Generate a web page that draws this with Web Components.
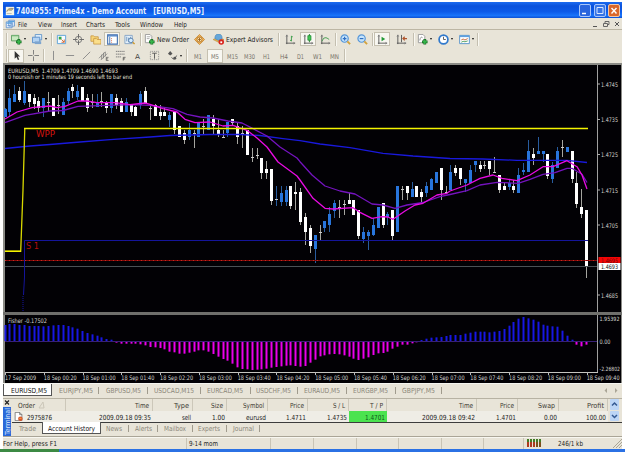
<!DOCTYPE html>
<html lang="en">
<head>
<meta charset="utf-8">
<title>7404955: Prime4x - Demo Account</title>
<style>
body
{
    margin: 0;
    width: 625px;
    height: 452px;
    overflow: hidden;
    background: #fff;
    font-family: "DejaVu Sans Condensed", "DejaVu Sans", sans-serif;
    font-size: 7px;
    color: #222;
    --face: #e8e4d8;
    --line: #bdb8a8;
}
</style>
</head>
<body>
<trade-app></trade-app>

<script>
//Small helper: every component gets an open shadow root
function mount(el, html) {
  el.attachShadow({ mode: "open" }).innerHTML = html;
}

//One line of text set to a fixed width
class FitText extends HTMLElement {
  connectedCallback() {
    const w = this.getAttribute("w");
    const size = this.getAttribute("size") || 7;
    mount(this, `
<style>
:host { display: block; flex: none; width: ${w}px; height: 10px; }
svg { display: block; overflow: visible; }
text { fill: currentColor; font-size: ${size}px; }
</style>
<svg width="${w}" height="10"><text x="0" y="7.6" textLength="${w}" lengthAdjust="spacingAndGlyphs">${this.getAttribute("t")}</text></svg>`);
  }
}
customElements.define("fit-text", FitText);

//Icons, drawn on a 12 x 12 box
const axes = `<path d="M2 1v10M1 10h10" stroke="#555" fill="none"/><path d="M1 3l1-2 1 2M9 9l2 1-2 1" stroke="#777" stroke-width=".6" fill="none"/>`;
const plus = `<path d="M8.5 5.5v6M5.5 8.5h6" stroke="#176b22" stroke-width="3"/><path d="M8.5 6.2v4.6M6.2 8.5h4.6" stroke="#36b54a" stroke-width="1.7"/>`;
const page = `<path d="M1.5.5h5l2 2v7h-7z" fill="#fff" stroke="#999"/>`;
const icons = {
  app: `<path d="M1 1h10v10H1z" fill="#f7f5e4"/><path d="M2 7q1-5 8-4l-2 2H5" fill="#d0c078" stroke="#777" stroke-width=".8"/><path d="M2 9h6" stroke="#999" stroke-width=".7"/>`,
  mdi: `<path d="M1.500 3.500h7v7h-7zM4.500 1.500h7v7h-7z" fill="#eef5ff" stroke="#5d8fcd"/><path d="M2 5h6M5 3h6" stroke="#58a2df" stroke-width="1.500"/><path d="M6 6h4M3 8h4" stroke="#5d8fcd"/>`,
  newchart: `<path d="M.5 1.500h8v6h-8z" fill="#c9eac1" stroke="#5a9a60"/><path d="M1 2h7" stroke="#78b977"/>` + plus,
  profiles: `<path d="M3.500.5h7v6h-7z" fill="#dcecfb" stroke="#6798c8"/><path d="M.5 3.500h8v6h-8z" fill="#b3d3f3" stroke="#5b8ec8"/><path d="M3 8h7v3H3z" fill="#7ea5cf"/>`,
  market: `<path d="M1.500 1.500h9v9h-9z" fill="#f6fbff" stroke="#5aa0d8"/><path d="M3 3h3v3H3z" fill="#35a647"/><path d="M6 6l3 3M9 6v3H6" stroke="#d4662e" fill="none"/>`,
  cross: `<circle cx="6" cy="6" r="3.500" fill="none" stroke="#777"/><path d="M6 0v5M6 7v5M0 6h5M7 6h5" stroke="#666"/>`,
  folders: `<path d="M1 2h3l1 1h4v5H1z" fill="#f6d477" stroke="#c5913a" stroke-width=".8"/><path d="M4 5h3l1 1h4v5H4z" fill="#fbdf8b" stroke="#c5913a" stroke-width=".8"/>`,
  terminal: `<path d="M.7 1h10.600v10H.7z" fill="#fff" stroke="#416fae" stroke-width="1.200"/><path d="M1 2h10" stroke="#5385c8" stroke-width="1.500"/><path d="M3 3v8" stroke="#4173b2"/><path d="M4.500 5h1M4.500 7h1M4.500 9h1" stroke="#d86c4e"/>`,
  tester: `<path d="M1 1.500h8v9H1z" fill="#e6f1fa" stroke="#84a3c5"/><path d="M3 3v5M5 4v5M7 3v4" stroke="#6d95c0"/><circle cx="7.500" cy="7" r="2.500" fill="#d4edff" stroke="#557ca9"/><path d="M9.500 9l2 2" stroke="#cc9a2e" stroke-width="1.500"/>`,
  order: page + `<path d="M3 3h4M3 5h3" stroke="#aaa"/>` + plus,
  meta: `<path d="M6 .5L11.500 6 6 11.500.5 6z" fill="#f3b65e" stroke="#c98b37"/><circle cx="6" cy="6" r="2.800" fill="#fbe0a9" stroke="#ae7427"/><path d="M6 4v4M4.500 6h3" stroke="#9c631d"/>`,
  expert: `<path d="M0 6l6-2 6 2-6 3z" fill="#e7b34e" stroke="#b7862e" stroke-width=".6"/><path d="M2 5q0-5 4-5t4 5l-4 2z" fill="#66a7d9" stroke="#417fb5" stroke-width=".6"/><circle cx="9" cy="8.800" r="3" fill="#d8231c"/><path d="M8 8h2v2H8z" fill="#fff"/>`,
  bars: axes + `<path d="M7 2v6M5.500 7H7M7 3h1.500" stroke="#3a9b47" fill="none"/>`,
  candle: axes + `<path d="M7 0v9" stroke="#23782e"/><path d="M5.300 1.800h3.400v5H5.300z" fill="#43c755" stroke="#218a31" stroke-width=".8"/>`,
  linechart: axes + `<path d="M2 8q2-5 4.500-4T10 6" stroke="#3f9b4b" fill="none"/>`,
  zoomin: `<circle cx="5" cy="5" r="4" fill="#c5e3fb" stroke="#5696d8" stroke-width="1.300"/><path d="M5 3v4M3 5h4" stroke="#2f6fc2" stroke-width="1.300"/><path d="M8 8l3 3" stroke="#d3a23c" stroke-width="2"/>`,
  zoomout: `<circle cx="5" cy="5" r="4" fill="#c5e3fb" stroke="#5696d8" stroke-width="1.300"/><path d="M3 5h4" stroke="#2f6fc2" stroke-width="1.300"/><path d="M8 8l3 3" stroke="#d3a23c" stroke-width="2"/>`,
  scroll: axes + `<path d="M5 3l4 2.500L5 8z" fill="#239a36"/>`,
  shift: axes + `<path d="M6 1v8" stroke="#555"/><path d="M12 5H8M9.500 3L7.500 5l2 2" stroke="#b1562d" stroke-width="1.200" fill="none"/>`,
  indicator: page + `<path d="M3 7q1-5 3-3" stroke="#888" fill="none"/>` + plus,
  clock: `<circle cx="6" cy="6" r="4.800" fill="#fff" stroke="#3079cc" stroke-width="1.900"/><path d="M6 3v3h2.500" stroke="#555" fill="none"/>`,
  template: `<path d="M.7 1.500h10.600v9H.7z" fill="#fff" stroke="#5290cb"/><path d="M1 2.500h10" stroke="#5fa0df" stroke-width="1.800"/><path d="M2.500 6.500l2-1 2 1 3-1.500" stroke="#c36434" fill="none"/><path d="M2.500 9l2-1 2 .5 3-1" stroke="#4a9d5a" fill="none"/>`,
  cursor: `<path d="M4 1v8.500l2-2 1.500 3.500 1.500-.7L7.500 7H10z" fill="#333"/>`,
  plus: `<path d="M6 0v5M6 7v5M0 6h5M7 6h5" stroke="#777"/>`,
  vline: `<path d="M6 1v10" stroke="#888"/>`,
  hline: `<path d="M2 6h9" stroke="#888"/>`,
  trend: `<path d="M2 10l8-8" stroke="#888"/>`,
  channel: `<path d="M1 9l7-7M3 11l7-7M4 5v5M6 3v6M8 2v5" stroke="#777" stroke-width=".8"/><path d="M9 8h2.500M9 8v3.500h2.500M9 9.700h2" stroke="#444" fill="none" stroke-width=".7"/>`,
  fibo: `<path d="M1 1.500h10M1 4.500h10M1 7.500h6" stroke="#777" stroke-dasharray="1.500 .5"/><path d="M9 11.500V8h2.500M9 9.700h2" stroke="#444" fill="none" stroke-width=".8"/>`,
  label: `<path d="M1.500 1.500h9v9h-9z" fill="none" stroke="#888" stroke-dasharray="1 1"/><path d="M3.500 3.500h5M6 3.500v6" stroke="#555"/>`,
  arrows: `<path d="M1 4l2.500-3L6 4 3.500 6z" fill="#555"/><path d="M5 8l2 2 4-4" stroke="#555" fill="none"/><circle cx="8.500" cy="9" r="1.600" fill="#555"/>`,
  sheet: `<path d="M1.500.5h6l3 3v8h-9z" fill="#fff" stroke="#666"/><path d="M7.500.5v3h3" fill="none" stroke="#666"/><circle cx="8.500" cy="9" r="3" fill="#d9542b"/><path d="M7 8.500h3" stroke="#f6c04a"/>`
};

class ToolIcon extends HTMLElement {
  connectedCallback() {
    const size = this.getAttribute("size") || 11;
    mount(this, `
<style>
:host { display: block; flex: none; width: ${size}px; height: ${size}px; }
svg { display: block; }
</style>
<svg width="${size}" height="${size}" viewBox="0 0 12 12">${icons[this.getAttribute("name")]}</svg>`);
  }
}
customElements.define("tool-icon", ToolIcon);

//Toolbar button: width comes from w, flags are on / drop
class ToolButton extends HTMLElement {
  connectedCallback() {
    mount(this, `
<style>
:host
{
    display: flex;
    flex: none;
    box-sizing: border-box;
    width: ${this.getAttribute("w")}px;
    height: 14px;
    align-items: center;
    justify-content: center;
    gap: 2px;
}
:host([on]) { background: #f8f7f1; border: 1px solid #c6c1b1; }
i { width: 0; border: 1.5px solid transparent; border-top: 2px solid #111; border-bottom: 0; }
</style>
<slot></slot>${this.hasAttribute("drop") ? "<i></i>" : ""}`);
  }
}
customElements.define("tool-button", ToolButton);

class ToolBar extends HTMLElement {
  constructor() {
    super();
    mount(this, `
<style>
:host { display: flex; align-items: center; box-sizing: border-box; height: 16px; padding-left: 2px; }
::slotted(hr) { flex: none; margin: 0 1px; border: 0; width: 1px; height: 13px; background: #c4bfb0; box-shadow: 1px 0 #f9f8f2; }
</style>
<slot></slot>`);
  }
}
customElements.define("tool-bar", ToolBar);

//Blue caption with the three window buttons
class TitleBar extends HTMLElement {
  constructor() {
    super();
    mount(this, `
<style>
:host
{
    display: flex;
    align-items: center;
    box-sizing: border-box;
    height: 16px;
    padding: 1px 2px 0 2px;
    gap: 2.500px;
    color: #e8f2ff;
    background: linear-gradient(#1c6cf0, #0b52dc 25%, #0c5ae8 60%, #1874fa 85%, #0c50d4);
}
.grow { flex: 1; }
svg { display: block; }
</style>
<tool-icon name="app" size="10"></tool-icon>
<fit-text w="188" size="9" t="7404955: Prime4x - Demo Account &#160; [EURUSD,M5]" style="margin-left:-1.5px;font-weight:bold"></fit-text>
<span class="grow"></span>
<svg width="12" height="13"><rect x=".5" y=".5" width="11" height="12" rx="1.500" fill="#2a65dd" stroke="#a9c7fa"/><path d="M3 9.500h4" stroke="#fff" stroke-width="1.500"/></svg>
<svg width="12" height="13"><rect x=".5" y=".5" width="11" height="12" rx="1.500" fill="#3674e6" stroke="#a9c7fa"/><path d="M3 3.500h6v6H3z" fill="none" stroke="#dce9ff"/></svg>
<svg width="12" height="13"><rect x=".5" y=".5" width="11" height="12" rx="1.500" fill="#da672a" stroke="#f2c8a5"/><path d="M3.500 4l5 5.500m0-5.500l-5 5.500" stroke="#fff" stroke-width="1.400"/></svg>`);
  }
}
customElements.define("title-bar", TitleBar);

class MenuBar extends HTMLElement {
  constructor() {
    super();
    //label, text width, room up to the next label
    const items = [["File", 9, 20], ["View", 14, 23], ["Insert", 16, 25], ["Charts", 19, 29], ["Tools", 15, 25], ["Window", 23, 34], ["Help", 13, 20]];
    mount(this, `
<style>
:host { display: flex; align-items: center; box-sizing: border-box; height: 12px; padding: 0 1px 0 2px; border-bottom: 1px solid #bcb6a4; }
tool-icon { margin-right: 3px; }
span { flex: none; }
svg { margin-left: auto; }
</style>
<tool-icon name="mdi" size="10"></tool-icon>
${items.map(([t, w, room]) => `<span style="width:${room}px"><fit-text w="${w}" t="${t}"></fit-text></span>`).join("")}
<svg width="30" height="10"><path d="M2 7.500h4" stroke="#555"/><path d="M12.500 4.500h4v3h-4zM14 4V2.500h4v3h-1.500" fill="none" stroke="#666"/><path d="M24 3l4 4m0-4l-4 4" stroke="#555"/></svg>`);
  }
}
customElements.define("menu-bar", MenuBar);

const STEP = 4.847;
const barX = (k) => 2.5 + k * STEP;

//high, body top, body bottom, low, up(1) / down(0); screen rows
const candles = [
  [108, 109, 117, 117, 1], [89, 98, 112, 117, 1], [85, 94, 102, 102, 1], [87, 91, 100, 102, 0], [81, 91, 103, 105, 1],
  [94, 94, 102, 107, 0], [94, 98, 104, 109, 0], [97, 101, 108, 112, 0], [98, 98, 108, 117, 1], [92, 102, 102, 112, 0],
  [98, 98, 116, 116, 0], [95, 105, 105, 114, 0], [98, 102, 115, 115, 1], [88, 91, 101, 104, 1], [84, 87, 91, 98, 0],
  [85, 91, 97, 100, 1], [87, 87, 101, 101, 0], [94, 98, 108, 112, 0], [94, 102, 102, 108, 0], [94, 102, 107, 107, 1],
  [92, 101, 101, 107, 0], [101, 102, 108, 113, 0], [94, 94, 108, 113, 1], [94, 98, 105, 109, 0], [98, 101, 112, 112, 0],
  [98, 102, 112, 112, 1], [105, 105, 112, 116, 0], [106, 107, 116, 116, 0], [91, 94, 105, 109, 1], [87, 91, 104, 104, 0],
  [105, 108, 108, 120, 0], [104, 105, 116, 116, 0], [105, 112, 116, 120, 0], [108, 112, 116, 116, 0], [112, 115, 120, 127, 1],
  [112, 112, 130, 134, 0], [126, 126, 137, 137, 0], [130, 133, 140, 144, 0], [123, 130, 137, 140, 1], [130, 133, 133, 148, 0],
  [122, 123, 137, 137, 1], [119, 126, 126, 134, 0], [115, 115, 130, 130, 1], [115, 119, 126, 134, 0], [119, 130, 134, 137, 0],
  [130, 137, 137, 137, 0], [122, 122, 133, 137, 1], [119, 119, 123, 126, 0], [123, 126, 137, 144, 0], [126, 133, 133, 148, 0],
  [130, 130, 155, 155, 0], [148, 157, 157, 162, 0], [148, 155, 155, 159, 0], [158, 158, 173, 179, 0], [161, 169, 173, 179, 0],
  [169, 169, 201, 205, 0], [186, 199, 199, 206, 1], [186, 193, 202, 206, 1], [186, 190, 202, 206, 1], [186, 186, 206, 209, 0],
  [182, 192, 194, 210, 0], [188, 192, 222, 225, 0], [213, 217, 232, 245, 0], [225, 228, 246, 253, 0], [235, 235, 249, 263, 1],
  [225, 232, 232, 240, 0], [221, 221, 228, 232, 1], [207, 214, 225, 232, 1], [200, 203, 211, 218, 1], [200, 207, 207, 218, 0],
  [200, 204, 204, 215, 0], [193, 200, 204, 204, 0], [200, 200, 215, 215, 0], [210, 210, 236, 239, 0], [227, 232, 239, 243, 1],
  [230, 232, 236, 250, 1], [218, 225, 235, 236, 1], [207, 207, 228, 228, 1], [203, 203, 225, 228, 0], [212, 214, 217, 225, 1],
  [210, 210, 236, 240, 0], [186, 186, 232, 232, 1], [186, 189, 189, 200, 0], [186, 186, 193, 200, 0], [182, 189, 197, 197, 1],
  [186, 186, 197, 197, 0], [189, 192, 197, 203, 0], [182, 186, 193, 197, 1], [178, 179, 190, 190, 1], [172, 172, 183, 183, 1],
  [168, 168, 190, 200, 0], [186, 192, 192, 193, 0], [165, 172, 190, 190, 1], [165, 168, 173, 176, 0], [168, 168, 179, 185, 0],
  [179, 179, 183, 192, 1], [165, 170, 183, 183, 1], [161, 161, 165, 172, 1], [161, 165, 169, 172, 0], [161, 165, 165, 169, 0],
  [161, 161, 169, 175, 0], [157, 172, 172, 172, 0], [175, 175, 190, 193, 0], [183, 186, 190, 190, 0], [180, 183, 187, 190, 1],
  [180, 186, 190, 193, 0], [168, 175, 193, 193, 1], [163, 170, 172, 175, 1], [140, 151, 172, 172, 1], [148, 154, 158, 165, 0],
  [137, 151, 154, 154, 1], [151, 151, 154, 162, 1], [154, 154, 176, 179, 0], [162, 165, 179, 183, 1], [147, 151, 168, 168, 1],
  [140, 147, 147, 157, 0], [147, 147, 152, 152, 1], [151, 151, 179, 183, 0], [172, 183, 204, 208, 0], [189, 207, 214, 218, 0],
  [210, 210, 267, 278, 0]
];

//Signed bar lengths, a third of a pixel each
const fisher = [
  48, 51, 51, 48, 48, 45, 45, 45, 44, 45, 47, 48, 48, 45, 41, 37, 30, 24, 20, 16, 11, 6, 4, -2, -5, -5, -5, -5, -7, -10,
  -15, -16, -18, -22, -29, -31, -35, -35, -32, -29, -25, -25, -29, -36, -44, -51, -56, -65, -76, -81, -82, -84, -83, -82,
  -80, -77, -75, -73, -71, -70, -72, -74, -72, -62, -53, -43, -40, -37, -36, -37, -40, -44, -50, -54, -50, -46, -39, -34,
  -33, -29, -20, -14, -8, -8, -4, -1, 3, 7, 10, 11, 12, 15, 18, 18, 18, 22, 25, 28, 28, 28, 26, 28, 30, 36, 46, 57, 67,
  72, 68, 64, 58, 49, 46, 44, 43, 31, 16, 4, -8, -13, -8
];

//Price chart, Fisher pane and both axes. The svg keeps window rows through its viewBox
class PriceChart extends HTMLElement {
  constructor() {
    super();
    const bars = candles.map(([h, t, b, l, up], k) => {
      const x = Math.round(barX(k) + 3) - 0.5;
      const wick = `<path d="M${x} ${h}V${l}" stroke="${up ? "#285c9e" : "#a5a5a0"}"/>`;
      if (b - t < 1) return wick + `<path d="M${x - 1.5} ${t + 0.5}h3" stroke="#ccc"/>`;
      return wick + `<path d="M${x - 1.5} ${t}h3v${b - t}h-3z" fill="${up ? "#2875dc" : "#fff"}"/>`;
    }).join("");
    const hist = fisher.map((v, k) => {
      const x = Math.round(barX(k) + 3) - 1.5;
      const h = Math.abs(v) / 3;
      return `<rect x="${x}" y="${v > 0 ? 341 - h : 342}" width="2" height="${h}" fill="${v > 0 ? "#1717e3" : "#ea00ea"}"/>`;
    }).join("");
    const label = (x, y, w, t, fill = "#d5d5d0", size = 6.2) =>
      `<text x="${x}" y="${y}" textLength="${w}" lengthAdjust="spacingAndGlyphs" fill="${fill}" font-size="${size}">${t}</text>`;
    const prices = [["1.4745", 84], ["1.4735", 119.500], ["1.4725", 154.500], ["1.4715", 190], ["1.4705", 225], ["1.4685", 295]]
      .map(([t, y]) => `<path d="M597 ${y}h3" stroke="#aaa"/>` + label(601, y + 2.5, 17, t)).join("");
    const times = ["17 Sep 2009", "18 Sep 00:20", "18 Sep 01:00", "18 Sep 01:40", "18 Sep 02:20", "18 Sep 03:00", "18 Sep 03:40", "18 Sep 04:20",
      "18 Sep 05:00", "18 Sep 05:40", "18 Sep 06:20", "18 Sep 07:00", "18 Sep 07:40", "18 Sep 08:20", "18 Sep 09:00", "18 Sep 09:40"]
      .map((t, i) => `<path d="M${5.5 + Math.round(i * STEP * 8)} 372v3" stroke="#bbb"/>` + label(5 + i * STEP * 8, 380, i ? 33 : 31, t)).join("");
    mount(this, `
<style>
:host { display: block; height: 321px; }
svg { display: block; overflow: visible; }
.ma { fill: none; stroke-width: 1.3; stroke-linejoin: round; }
</style>
<svg width="619" height="321" viewBox="3 63 619 321">
<path d="M3 63h619v321H3z" fill="#8b8b86"/>
<path d="M5 65h616v318H5z" fill="#020105"/>
${bars}
<path d="M5 260.500h592" stroke="#850808"/><path d="M5 260.500h592" stroke="#c62b1e" stroke-dasharray="1 3"/>
<path d="M5 266.500h592" stroke="#4b5155"/>
<path d="M588 240.500H24.500V277L23.500 295" fill="none" stroke="#14149a"/><path d="M23 296v16" stroke="#1414a0" stroke-dasharray="1 1"/>
<polyline class="ma" stroke="#1919dc" points="5,148.500 30,146 50,144.500 80,142 110,139.700 150,137 170,135.500 210,134.500 240,134.500 260,135.500 283,138.700 300,140.700 320,144 350,147.700 383,153.300 413,156 450,158.500 483,159 517,160.300 567,160.300 587,162.500"/>
<polyline class="ma" stroke="#7413be" points="5,122.700 25,115.300 50,111 63,110.500 78,106.300 100,105.700 133,104.700 150,105.300 173,108.700 187,114.300 200,117 213,118 228,121 242,123 253,128.700 267,136 280,147 297,158 300,161.700 312,175 325,186 340,191 355,194 372,204 383,205 395,208.300 407,205 423,202.500 440,196.700 450,194.500 467,190.700 480,185 497,182.300 518,183.300 530,179.300 543,174.300 555,172.700 567,168.300 572,168.300 582,174.300 587,182.500"/>
<polyline class="ma" stroke="#e80be2" points="5,119 17,112 32,107.700 50,106 57,107.700 65,106.300 78,101 87,101 97,102.700 115,102.700 130,104.700 145,103 150,104.300 163,108.700 177,112 185,119.300 195,122.700 210,122 223,126 233,125.300 247,130.300 257,138 267,147 278,162 297,176 300,180 313,198.300 325,208.300 333,209 353,207.700 360,212.300 372,218.300 382,216.700 388,217 393,219.300 405,211 415,205 423,203.300 437,195 447,193.300 450,191 467,185 480,178.300 493,175 502,178.300 517,180.700 530,175 543,166.700 553,166.700 567,160.700 577,166.700 582,175 587,189"/>
<path d="M5 251.300h15.700L23 190l1.800-61.700" fill="none" stroke="#d8d800" stroke-width="1.300"/>
<path d="M24 128.500H588M5 251.300h16" stroke="#f4f400" stroke-width="1.400"/>
${label(8, 73, 110, "EURUSD,M5 &#160;1.4709 1.4709 1.4690 1.4693", "#e2e2dc", 6)}
${label(8, 79.300, 124, "0 hoursish or 1 minutes 19 seconds left to bar end", "#e2e2dc", 6)}
${label(36, 136.500, 19, "WPP", "#d4140e", 8)}
${label(26, 248.500, 13, "S 1", "#b40d0d", 8)}
<path d="M3 312h619v3H3z" fill="#6f6f6c"/>
<path d="M5 341.500h592" stroke="#382078"/>
${hist}
${label(8, 322.500, 39, "Fisher -0.17502")}
<path d="M597.500 65v247M597.500 315v57" stroke="#a0a0a0"/>
<path d="M5 372.500h593" stroke="#c5c5c0"/>
${prices}
<path d="M598.500 257h22v6h-22z" fill="#f50505"/>${label(601, 262.500, 17, "1.4695", "#6a0808")}
<path d="M598.500 263h22v7h-22z" fill="#fff"/>${label(601, 269, 17, "1.4693", "#111")}
${label(599.500, 321, 20, "1.95392", "#d5d5d0", 5.8)}${label(599.500, 343.500, 11, "0.00")}${label(599.500, 370.500, 20.5, "-2.26802", "#d5d5d0", 5.8)}
${times}
<path d="M3 383.500h619" stroke="#f4f4ef"/>
</svg>`);
  }
}
customElements.define("price-chart", PriceChart);

//Row of tabs. Each cell ends with its own divider
class TabStrip extends HTMLElement {
  connectedCallback() {
    const tabs = JSON.parse(this.getAttribute("tabs"));
    const on = Number(this.getAttribute("on"));
    mount(this, `
<style>
:host { display: flex; align-items: flex-start; color: #8a8678; }
div { display: flex; flex: none; align-items: center; box-sizing: border-box; height: 12px; position: relative; }
div::after { content: ""; position: absolute; right: 0; top: 3px; height: 7px; width: 1px; background: #a09b8d; }
.on { background: #fff; color: #111; border: 1px solid #555; border-top: 0; }
.on::after, .bare::after { display: none; }
</style>
${tabs.map(([t, cell, pad, w], i) => `<div class="${i === on ? "on" : i === on - 1 ? "bare" : ""}" style="width:${cell}px;padding-left:${pad}px"><fit-text w="${w}" t="${t}"></fit-text></div>`).join("")}
<slot></slot>`);
  }
}
customElements.define("tab-strip", TabStrip);

//Docked terminal window with the order history
class TerminalPane extends HTMLElement {
  constructor() {
    super();
    //column width, header, header width, value, value width
    const cols = [
      [54, "Order", 17, "2975876", 25], [87, "Time", 14, "2009.09.18 09:35", 52], [40, "Type", 15, "sell", 9],
      [34, "Size", 12, "1.00", 13], [41, "Symbol", 21, "eurusd", 20], [40, "Price", 14, "1.4711", 20],
      [41, "S / L", 12, "1.4735", 20], [38, "T / P", 13, "1.4701", 20], [90, "Time", 14, "2009.09.18 09:42", 53],
      [41, "Price", 14, "1.4701", 20], [41, "Swap", 17, "0.00", 13], [49, "Profit", 17, "100.00", 20]
    ];
    const row = (ti, wi, cls) => `<div class="row ${cls}">${cols.map((c, i) =>
      `<span style="width:${c[0]}px">${i === 0 && cls === "data" ? '<tool-icon name="sheet" size="9"></tool-icon>' : ""}<fit-text w="${c[wi]}" t="${c[ti]}"></fit-text>${i === 0 && cls === "head" ? '<svg width="7" height="8"><path d="M1 7l4-6 1 6z" fill="none" stroke="#cbc6b8"/></svg>' : ""}</span>`).join("")}</div>`;
    const tabs = [["Trade", 30, 7, 17], ["Account History", 59, 5, 47], ["News", 28, 5, 16], ["Alerts", 29, 6, 17], ["Mailbox", 35, 6, 22], ["Experts", 34, 5, 22], ["Journal", 33, 6, 21]];
    mount(this, `
<style>
:host { display: flex; height: 38px; border-top: 1px solid #b7b2a3; box-sizing: border-box; }
.side { display: flex; flex-direction: column; width: 9px; align-items: center; }
.side svg { display: block; }
.main { flex: 1; display: flex; flex-direction: column; }
.table { display: flex; height: 24px; border-bottom: 1px solid #3c3c3c; box-sizing: border-box; }
.row { display: flex; align-items: center; }
.row span { display: flex; align-items: center; justify-content: flex-end; box-sizing: border-box; padding-right: 2.500px; height: 100%; }
.row span:first-child { justify-content: flex-start; gap: 3px; }
.head { height: 12px; color: #3b3932; }
.head span { border-right: 1px solid #ccc7b9; padding-right: 3px; }
.head span:first-child { padding-left: 6px; }
.data { height: 11px; background: #efede6; }
.data span:first-child { padding-left: 2px; gap: 4px; }
.data span:nth-child(8) { background: #4be34f; color: #0b581a; }
.scroll { display: flex; flex-direction: column; gap: 1px; padding-left: 2px; }
tab-strip { margin-top: -1px; }
</style>
<div class="side">
  <svg width="9" height="8"><path d="M2 1.500l4 4m0-4l-4 4" stroke="#222" stroke-width="1.200"/></svg>
  <svg width="9" height="29"><rect width="8" height="29" fill="#2a68d8"/><text transform="translate(6.500 28) rotate(-90)" font-size="7" fill="#dbe8ff" textLength="27" lengthAdjust="spacingAndGlyphs">Terminal</text></svg>
</div>
<div class="main">
  <div class="table">
    <div>${row(1, 2, "head")}${row(3, 4, "data")}</div>
    <div class="scroll">
      <svg width="9" height="11"><rect width="9" height="11" rx="1" fill="#bcd5f6"/><path d="M2 6.500L4.500 4 7 6.500" fill="none" stroke="#355a93" stroke-width="1.500"/></svg>
      <svg width="9" height="10"><rect width="9" height="10" rx="1" fill="#bcd5f6"/><path d="M2 4l2.500 2.500L7 4" fill="none" stroke="#355a93" stroke-width="1.500"/></svg>
    </div>
  </div>
  <tab-strip on="1" tabs='${JSON.stringify(tabs)}'></tab-strip>
</div>`);
  }
}
customElements.define("terminal-pane", TerminalPane);

class StatusBar extends HTMLElement {
  constructor() {
    super();
    mount(this, `
<style>
:host { display: flex; align-items: center; box-sizing: border-box; height: 13px; border-top: 1px solid #aaa597; box-shadow: inset 0 1px #f8f7f1; }
div { display: flex; flex: none; align-items: center; height: 11px; box-sizing: border-box; border-right: 1px solid #c9c4b5; }
svg { margin-left: auto; }
</style>
<div style="width:184px"><fit-text w="54" t="For Help, press F1"></fit-text></div>
<div style="width:84px;padding-left:2px"><fit-text w="29" t="9-14 mom"></fit-text></div>
<div style="width:43px"></div><div style="width:43px"></div><div style="width:42px"></div><div style="width:43px"></div><div style="width:42px"></div>
<div style="width:40px"></div>
<svg width="14" height="9" style="margin:0 17px 0 3px"><path d="M0 4.500h14" stroke="#ad3a20" stroke-width="7" stroke-dasharray="2 1"/><path d="M0 1.500h14" stroke="#407c25" stroke-width="3" stroke-dasharray="2 1"/><path d="M9 5.500h5" stroke="#7c501b" stroke-width="5" stroke-dasharray="2 1"/></svg>
<fit-text w="25" t="246/1 kb"></fit-text>
<svg width="10" height="10"><path d="M1 10l9-9M4 10l6-6M7 10l3-3" stroke="#aaa595"/></svg>`);
  }
}
customElements.define("status-bar", StatusBar);

class TradeApp extends HTMLElement {
  constructor() {
    super();
    const pairs = [["EURUSD,M5", 49, 7, 36], ["EURJPY,M5", 47, 7, 34], ["GBPUSD,M5", 49, 7, 35], ["USDCAD,M15", 53, 6, 40], ["EURCAD,M5", 50, 6, 36],
      ["USDCHF,M5", 47, 5, 35], ["EURAUD,M5", 49, 6, 36], ["EURGBP,M5", 49, 6, 35], ["GBPJPY,M5", 46, 6, 33]];
    const btn = (name, w, flags = "") => `<tool-button w="${w}" ${flags}><tool-icon name="${name}"></tool-icon></tool-button>`;
    const frames = [["M1", 19, 8], ["M5", 16, 8, "on"], ["M15", 18, 11], ["M30", 17, 11], ["H1", 17, 7], ["H4", 17, 8], ["D1", 17, 7], ["W1", 17, 9], ["MN", 17, 9]];
    mount(this, `
<style>
:host { display: block; padding: 2px 3px 0; }
.window { display: flex; flex-direction: column; width: 619px; background: var(--face); }
.pairs { display: flex; height: 14px; }
.pairs svg { margin: 2px 3px 0 auto; }
.small { color: #77736a; }
.task { height: 3px; margin: 0 -3px; background: linear-gradient(90deg, #3c8a44 59px, #2b71e4 59px); }
</style>
<div class="window">
  <title-bar></title-bar>
  <menu-bar></menu-bar>
  <tool-bar style="height:18px">
    <hr>${btn("newchart", 20, "drop")}${btn("profiles", 22, "drop")}<hr>
    ${btn("market", 17)}${btn("cross", 17)}${btn("folders", 17)}${btn("terminal", 16, "on")}${btn("tester", 19)}<hr>
    <tool-button w="48"><tool-icon name="order"></tool-icon><fit-text w="32" t="New Order"></fit-text></tool-button>
    ${btn("meta", 19)}
    <tool-button w="68"><tool-icon name="expert"></tool-icon><fit-text w="47" t="Expert Advisors"></fit-text></tool-button><hr>
    ${btn("bars", 20)}${btn("candle", 16, "on")}${btn("linechart", 18)}<hr>
    ${btn("zoomin", 17)}${btn("zoomout", 17)}<hr>
    ${btn("scroll", 16, "on")}${btn("shift", 22)}<hr>
    ${btn("indicator", 19, "drop")}${btn("clock", 22, "drop")}${btn("template", 20, "drop")}<hr>
  </tool-bar>
  <tool-bar style="height:15px" class="small">
    <hr>${btn("cursor", 16, "on")}${btn("plus", 18)}<hr>
    ${btn("vline", 16)}${btn("hline", 17)}${btn("trend", 17)}${btn("channel", 17)}${btn("fibo", 17)}
    <tool-button w="17"><fit-text w="5" t="A" style="color:#444"></fit-text></tool-button>
    ${btn("label", 17)}${btn("arrows", 22, "drop")}<hr>
    ${frames.map(([t, w, tw, f]) => `<tool-button w="${w}" ${f || ""}><fit-text w="${tw}" size="6.500" t="${t}"></fit-text></tool-button>`).join("")}<hr>
  </tool-bar>
  <price-chart></price-chart>
  <div class="pairs">
    <tab-strip on="0" tabs='${JSON.stringify(pairs)}'></tab-strip>
    <svg width="16" height="9"><path d="M4 2v5L1.500 4.500zM12 2v5l2.500-2.500z" fill="#aaa596"/></svg>
  </div>
  <terminal-pane></terminal-pane>
  <status-bar></status-bar>
</div>
<div class="task"></div>`);
  }
}
customElements.define("trade-app", TradeApp);
</script>
</body>
</html>
